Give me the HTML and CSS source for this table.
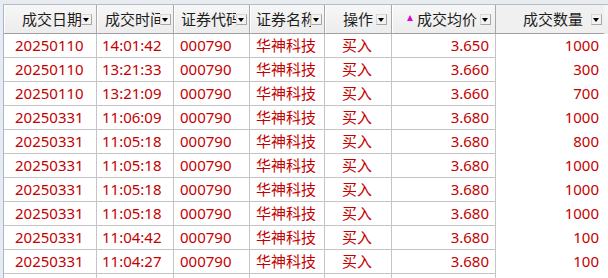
FILE: index.html
```html
<!DOCTYPE html>
<html lang="zh">
<head>
<meta charset="utf-8">
<title>成交查询</title>
<link rel="stylesheet" href="styles.css">
</head>
<body>
<div class="frame">
  <div class="grid">
    <div class="row head">
      <div class="hc c1"><span class="lbl">成交日期</span><span class="dd"></span></div>
      <div class="hc c2"><span class="lbl">成交时间</span><span class="dd"></span></div>
      <div class="hc c3"><span class="lbl">证券代码</span><span class="dd"></span></div>
      <div class="hc c4"><span class="lbl">证券名称</span><span class="dd"></span></div>
      <div class="hc c5"><span class="lbl">操作</span><span class="dd"></span></div>
      <div class="hc c6"><span class="lbl"><span class="sort"></span>成交均价</span><span class="dd"></span></div>
      <div class="hc c7"><span class="lbl">成交数量</span><span class="dd"></span></div>
    </div>
    <div class="row"><div class="c1">20250110</div><div class="c2">14:01:42</div><div class="c3">000790</div><div class="c4">华神科技</div><div class="c5">买入</div><div class="c6">3.650</div><div class="c7">1000</div></div>
    <div class="row"><div class="c1">20250110</div><div class="c2">13:21:33</div><div class="c3">000790</div><div class="c4">华神科技</div><div class="c5">买入</div><div class="c6">3.660</div><div class="c7">300</div></div>
    <div class="row"><div class="c1">20250110</div><div class="c2">13:21:09</div><div class="c3">000790</div><div class="c4">华神科技</div><div class="c5">买入</div><div class="c6">3.660</div><div class="c7">700</div></div>
    <div class="row"><div class="c1">20250331</div><div class="c2">11:06:09</div><div class="c3">000790</div><div class="c4">华神科技</div><div class="c5">买入</div><div class="c6">3.680</div><div class="c7">1000</div></div>
    <div class="row"><div class="c1">20250331</div><div class="c2">11:05:18</div><div class="c3">000790</div><div class="c4">华神科技</div><div class="c5">买入</div><div class="c6">3.680</div><div class="c7">800</div></div>
    <div class="row"><div class="c1">20250331</div><div class="c2">11:05:18</div><div class="c3">000790</div><div class="c4">华神科技</div><div class="c5">买入</div><div class="c6">3.680</div><div class="c7">1000</div></div>
    <div class="row"><div class="c1">20250331</div><div class="c2">11:05:18</div><div class="c3">000790</div><div class="c4">华神科技</div><div class="c5">买入</div><div class="c6">3.680</div><div class="c7">1000</div></div>
    <div class="row"><div class="c1">20250331</div><div class="c2">11:05:18</div><div class="c3">000790</div><div class="c4">华神科技</div><div class="c5">买入</div><div class="c6">3.680</div><div class="c7">1000</div></div>
    <div class="row"><div class="c1">20250331</div><div class="c2">11:04:42</div><div class="c3">000790</div><div class="c4">华神科技</div><div class="c5">买入</div><div class="c6">3.680</div><div class="c7">100</div></div>
    <div class="row"><div class="c1">20250331</div><div class="c2">11:04:27</div><div class="c3">000790</div><div class="c4">华神科技</div><div class="c5">买入</div><div class="c6">3.680</div><div class="c7">100</div></div>
    <div class="row"><div class="c1"></div><div class="c2"></div><div class="c3"></div><div class="c4"></div><div class="c5"></div><div class="c6"></div><div class="c7"></div></div>
  </div>
</div>
</body>
</html>
```
FILE: styles.css
```css
html, body {
  margin: 0;
  padding: 0;
  width: 608px;
  height: 278px;
  overflow: hidden;
  background: #e8ecf1;
  font-family: "Noto Sans", "Noto Sans CJK SC", sans-serif;
  font-size: 15px;
}
.frame {
  padding: 4px 0 0 3px;
}
.grid {
  border-top: 1px solid #b4bcc8;
  border-left: 1px solid #a3b6d2;
  background: #ffffff;
}
.row {
  display: grid;
  grid-template-columns: 93px 77px 76px 75px 67px 104px 108px 1fr;
  height: 24px;
}
.row > div {
  box-sizing: border-box;
  border-right: 1px solid #c4c4c4;
  border-bottom: 1px solid #c4c4c4;
  color: #c40000;
  line-height: 23px;
  white-space: nowrap;
  overflow: hidden;
}
.row .c1 { padding-left: 11px; }
.row .c2 { padding-left: 5px; }
.row .c3 { padding-left: 6px; }
.row .c4 { padding-left: 6px; }
.row .c5 { padding-left: 17px; }
.row .c6 { text-align: right; padding-right: 6px; }
.row .c7 { text-align: right; padding-right: 5px; }

.row.head {
  height: 29px;
  background: linear-gradient(#f7f7f7, #ececec);
}
.row.head > .hc {
  display: flex;
  align-items: center;
  color: #1e1e1e;
  border-right: 1px solid #a9a9a9;
  border-bottom: 1px solid #a0a0a0;
  box-shadow: inset 1px 0 0 #ffffff;
  line-height: 28px;
  padding: 0;
}
.hc .lbl {
  flex: 1 1 auto;
  min-width: 0;
  overflow: hidden;
  white-space: nowrap;
}
.hc.c1 .lbl { padding-left: 18px; }
.hc.c2 .lbl { padding-left: 8px; }
.hc.c3 .lbl { padding-left: 7px; }
.hc.c4 .lbl { padding-left: 6px; }
.hc.c5 .lbl { padding-left: 18px; }
.hc.c6 .lbl { text-align: right; padding-right: 3px; }
.hc.c7 .lbl { text-align: right; padding-right: 8px; }

.hc .dd {
  flex: none;
  position: relative;
  box-sizing: border-box;
  width: 11px;
  height: 11px;
  margin-right: 2px;
  background: #f2f2f2;
  border: 1px solid #a6a6a6;
  border-top-color: #d8d8d8;
  border-left-color: #d8d8d8;
}
.hc.c1 .dd, .hc.c5 .dd, .hc.c6 .dd { margin-right: 4px; }
.hc .dd::after {
  content: "";
  position: absolute;
  left: 1px;
  top: 3px;
  border-left: 3.5px solid transparent;
  border-right: 3.5px solid transparent;
  border-top: 4px solid #000000;
}
.sort {
  display: inline-block;
  width: 0;
  height: 0;
  border-left: 3.5px solid transparent;
  border-right: 3.5px solid transparent;
  border-bottom: 6px solid #e000e0;
  margin-right: 4px;
  vertical-align: 4px;
}
.row.head > div:last-child {
  border-right: none;
  box-shadow: none;
  background: #f0f0f0;
}
.row > div:last-child {
  border-right: none;
  border-bottom: none;
}
```
